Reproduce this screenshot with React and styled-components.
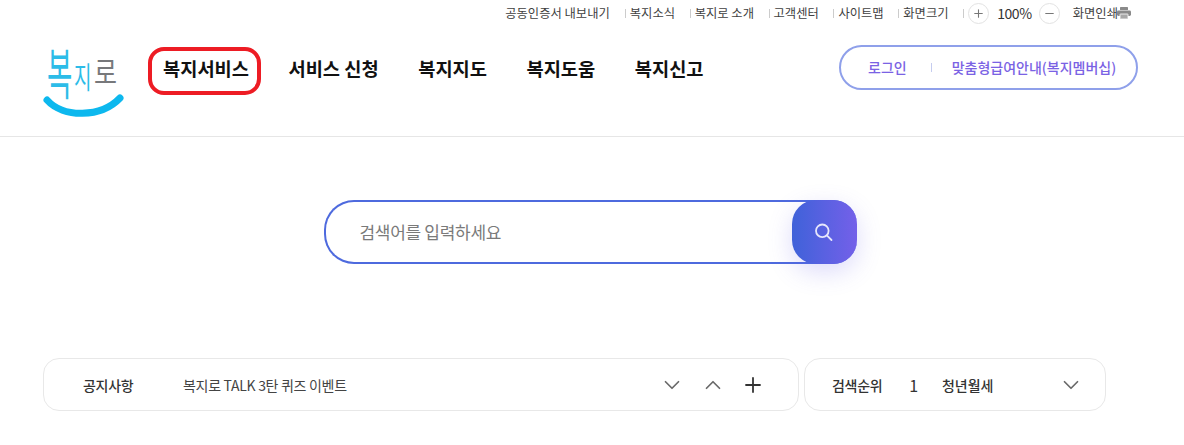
import React from "react";
import styled, { createGlobalStyle } from "styled-components";
import { ChevronDown, ChevronUp, Plus, Minus } from "lucide-react";

const utilLinks = ["복지소식", "복지로 소개", "고객센터", "사이트맵", "화면크기"];
const navItems = ["복지서비스", "서비스 신청", "복지지도", "복지도움", "복지신고"];

const App = () => {
    return (
        <Page>
            <GlobalStyle />
            <Header>
                <UtilBar>
                    <UtilFirst>공동인증서 내보내기</UtilFirst>
                    {utilLinks.map((t) => (
                        <UtilLink key={t}>{t}</UtilLink>
                    ))}
                    <ZoomGroup>
                        <RoundButton><Plus size={13} strokeWidth={2} /></RoundButton>
                        <ZoomValue>100%</ZoomValue>
                        <RoundButton><Minus size={13} strokeWidth={2} /></RoundButton>
                    </ZoomGroup>
                    <PrintButton>
                        화면인쇄
                        <PrintIcon viewBox="0 0 14 12" fill="#8a8a8a">
                            <rect x="3" y="0" width="8" height="3" rx="0.6" />
                            <rect x="0" y="3.6" width="14" height="5.4" rx="1.4" />
                            <rect x="3" y="7" width="8" height="5" rx="0.5" fill="#a8a8a8" stroke="#fff" strokeWidth="0.8" />
                        </PrintIcon>
                    </PrintButton>
                </UtilBar>
                <MainBar>
                    <Logo viewBox="0 0 84 76" aria-label="복지로">
                        <LogoText transform="translate(4 50) scale(0.95 1.9)" $size={29} fill="#2cbce8">복</LogoText>
                        <LogoText transform="translate(31 44) scale(0.95 1.5)" $size={20} fill="#2cbce8">지</LogoText>
                        <LogoText transform="translate(51 39) scale(1 1.2)" $size={25} fill="#77787b">로</LogoText>
                        <path d="M4 56 C 20 74, 58 74, 77 54" fill="none" stroke="#0db8ee" strokeWidth="7" strokeLinecap="round" />
                    </Logo>
                    <Nav>
                        {navItems.map((t, i) => (
                            <NavItem key={t} $active={i === 0}>{t}</NavItem>
                        ))}
                    </Nav>
                    <AuthPill>
                        <AuthLink>로그인</AuthLink>
                        <AuthDivider />
                        <AuthLink>맞춤형급여안내(복지멤버십)</AuthLink>
                    </AuthPill>
                </MainBar>
            </Header>
            <SearchSection>
                <SearchBox>
                    <SearchInput placeholder="검색어를 입력하세요" />
                    <SearchButton>
                        <svg width="20" height="20" viewBox="0 0 20 20" fill="none" stroke="#e6e6fb" strokeWidth="1.8" strokeLinecap="round">
                            <circle cx="8.3" cy="8.8" r="6.3" />
                            <path d="M13.1 13.6 L17.5 18" />
                        </svg>
                    </SearchButton>
                </SearchBox>
            </SearchSection>
            <InfoRow>
                <NoticeCard>
                    <NoticeLabel>공지사항</NoticeLabel>
                    <NoticeText>복지로 TALK 3탄 퀴즈 이벤트</NoticeText>
                    <NoticeControls>
                        <IconButton $color="#6a6a6a"><ChevronDown size={26} strokeWidth={1.6} /></IconButton>
                        <IconButton $color="#6a6a6a"><ChevronUp size={26} strokeWidth={1.6} /></IconButton>
                        <IconButton $color="#333"><Plus size={24} strokeWidth={1.8} /></IconButton>
                    </NoticeControls>
                </NoticeCard>
                <RankCard>
                    <RankLabel>검색순위</RankLabel>
                    <RankNumber>1</RankNumber>
                    <RankWord>청년월세</RankWord>
                    <IconButton $color="#6a6a6a"><ChevronDown size={26} strokeWidth={1.6} /></IconButton>
                </RankCard>
            </InfoRow>
        </Page>
    );
};

const GlobalStyle = createGlobalStyle`
    html, body {
        margin: 0;
        background: #fff;
        overflow: hidden;
    }
    * {
        box-sizing: border-box;
    }
    body {
        font-family: "Noto Sans CJK KR", "Noto Sans", sans-serif;
    }
`;

const Page = styled.div`
    width: 1184px;
    height: 445px;
    overflow: hidden;
`;

const Header = styled.header`
    height: 137px;
    border-bottom: 1px solid #e6e6e6;
`;

const UtilBar = styled.div`
    height: 26px;
    padding-right: 53px;
    display: flex;
    justify-content: flex-end;
    align-items: center;
    font-size: 12.3px;
    color: #3f3f3f;
`;

const UtilFirst = styled.span`
    margin-right: 15px;
`;

const UtilLink = styled.span`
    margin-right: 14.6px;
    padding-left: 5px;
    position: relative;

    &::before {
        content: "";
        position: absolute;
        left: 0;
        top: 5px;
        height: 9px;
        width: 1px;
        background: #ccc;
    }
`;

const ZoomGroup = styled.div`
    display: flex;
    align-items: center;
    gap: 7px;
    margin-right: 13px;
    padding-left: 5px;
    position: relative;

    &::before {
        content: "";
        position: absolute;
        left: 0;
        top: 6px;
        height: 9px;
        width: 1px;
        background: #ccc;
    }
`;

const RoundButton = styled.span`
    width: 21px;
    height: 21px;
    border: 1px solid #e2e2e2;
    border-radius: 50%;
    display: flex;
    justify-content: center;
    align-items: center;
    color: #777;
`;

const ZoomValue = styled.span`
    font-size: 14px;
    letter-spacing: -0.4px;
    color: #333;
    margin-left: 1px;
`;

const PrintButton = styled.span`
    display: flex;
    align-items: center;
`;

const PrintIcon = styled.svg`
    width: 14px;
    height: 12px;
    margin-left: -1px;
`;

const MainBar = styled.div`
    display: flex;
    align-items: center;
    height: 84px;
    padding: 0 46px 0 43px;
`;

const Logo = styled.svg`
    width: 84px;
    height: 76px;
    margin-top: 28px;
    flex: none;
    overflow: visible;
`;

const LogoText = styled.text`
    font-size: ${(p) => p.$size}px;
    font-family: "Noto Sans CJK KR", sans-serif;
    font-weight: 400;
`;

const Nav = styled.nav`
    display: flex;
    gap: 39.5px;
    margin-left: 36px;
    margin-top: -2px;
    flex: 1;
`;

const NavItem = styled.a`
    position: relative;
    font-size: 18.7px;
    font-weight: 700;
    color: #111;
    white-space: nowrap;

    ${(p) => p.$active && `
        &::after {
            content: "";
            position: absolute;
            left: -15px;
            right: -12px;
            top: -7px;
            bottom: -14px;
            border: 4px solid #ed1c24;
            border-radius: 16px;
        }
    `}
`;

const AuthPill = styled.div`
    width: 299px;
    height: 45px;
    margin-top: -2px;
    padding-left: 27px;
    border: 2px solid #8fa0ea;
    border-radius: 23px;
    display: flex;
    align-items: center;
    font-size: 14px;
    font-weight: 500;
    color: #7a62e4;
`;

const AuthLink = styled.a`
    white-space: nowrap;
`;

const AuthDivider = styled.i`
    width: 1px;
    height: 9px;
    margin: 0 20px 0 24px;
    background: #c5ccef;
`;

const SearchSection = styled.section`
    display: flex;
    justify-content: center;
    padding: 63px 4px 94px 0;
`;

const SearchBox = styled.div`
    width: 533px;
    height: 64px;
    display: flex;
    border: 2px solid #4e6ade;
    border-right: none;
    border-radius: 30px 24px 24px 30px;
    position: relative;
`;

const SearchInput = styled.input`
    flex: 1;
    min-width: 0;
    border: none;
    outline: none;
    background: transparent;
    padding: 0 0 2px 34px;
    font-family: inherit;
    font-size: 17px;
    letter-spacing: -0.3px;

    &::placeholder {
        color: #7a7a7a;
        opacity: 1;
    }
`;

const SearchButton = styled.button`
    width: 65px;
    height: 64px;
    margin: -2px 0;
    border: none;
    border-radius: 24px;
    background: linear-gradient(90deg, #3f62d9, #7460e9);
    box-shadow: 0 8px 24px rgba(100, 90, 230, 0.22);
    display: flex;
    justify-content: center;
    align-items: center;
    padding: 0;
`;

const InfoRow = styled.div`
    display: flex;
    gap: 5px;
    padding-left: 43px;
`;

const Card = styled.div`
    height: 53px;
    border: 1px solid #e8e8e8;
    border-radius: 16px;
    display: flex;
    align-items: center;
    font-size: 14px;
    letter-spacing: -0.3px;
`;

const NoticeCard = styled(Card)`
    width: 756px;
    padding: 0 33px 0 39px;
`;

const NoticeLabel = styled.strong`
    font-weight: 500;
    color: #333;
    width: 100px;
`;

const NoticeText = styled.span`
    flex: 1;
    color: #444;
`;

const NoticeControls = styled.div`
    display: flex;
    align-items: center;
    gap: 15px;
`;

const IconButton = styled.span`
    display: flex;
    color: ${(p) => p.$color};
`;

const RankCard = styled(Card)`
    width: 302px;
    padding: 0 21px 0 27px;
`;

const RankLabel = styled.strong`
    font-weight: 500;
    color: #333;
`;

const RankNumber = styled.span`
    font-size: 16px;
    color: #333;
    margin-left: 27px;
`;

const RankWord = styled.span`
    flex: 1;
    margin-left: 24px;
    letter-spacing: 0;
    font-weight: 500;
    color: #333;
`;

export default App;
